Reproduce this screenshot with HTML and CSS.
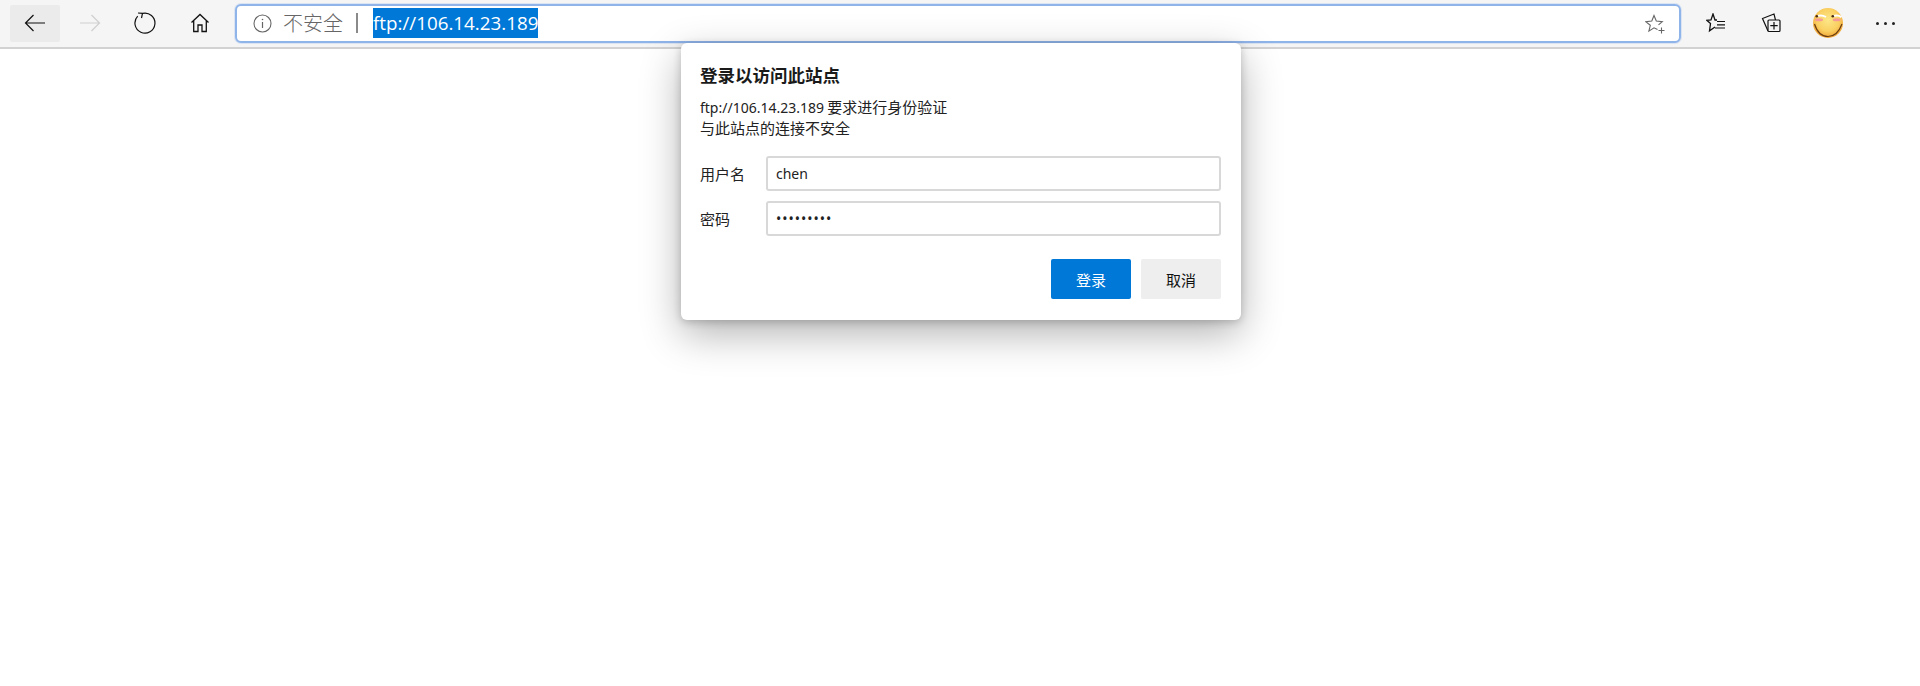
FILE: index.html
```html
<!DOCTYPE html>
<html lang="zh-CN">
<head>
<meta charset="utf-8">
<title>ftp://106.14.23.189</title>
<link rel="stylesheet" href="styles.css">
</head>
<body>
<header class="toolbar">
  <div class="nav">
    <button class="tool tool-back"><svg width="22" height="18" viewBox="0 0 22 18"><path d="M21 9H1.500M9.500 1L1.500 9l8 8" fill="none" stroke="#111" stroke-width="1.200"/></svg></button>
    <button class="tool tool-forward"><svg width="22" height="18" viewBox="0 0 22 18"><path d="M1 9h19.500M12.500 1l8 8-8 8" fill="none" stroke="#cfcfcf" stroke-width="1.200"/></svg></button>
    <button class="tool tool-reload"><svg width="24" height="24" viewBox="0 0 24 24"><path d="M9.500 2.400A10 10 0 1 1 4.700 5.200M5 2l4.500.4-1 4.600" fill="none" stroke="#111" stroke-width="1.200"/></svg></button>
    <button class="tool tool-home"><svg width="20" height="20" viewBox="0 0 20 20"><path d="M1.500 9.500L10 1.500l8.500 8M3.700 8v10.500h4.300v-6.500h4v6.500h4.300V8" fill="none" stroke="#111" stroke-width="1.300"/></svg></button>
  </div>
  <div class="omnibox">
    <svg class="info" width="19" height="19" viewBox="0 0 19 19"><circle cx="9.500" cy="9.500" r="8.500" fill="none" stroke="#666" stroke-width="1.100"/><path d="M9.500 8v6" stroke="#666" stroke-width="1.200"/><circle cx="9.500" cy="5.500" r=".8" fill="#666"/></svg>
    <span class="insecure">不安全</span>
    <span class="divider"></span>
    <span class="url">ftp://106.14.23.189</span>
    <svg class="fav-add" width="20" height="20" viewBox="0 0 20 20"><path d="M12.500 15.500l-3.500-1.700-5.100 3.300 1.400-5.800L.8 7.600l6-.6L9 1.500l2.300 5.500 6 .6-3.800 3.300" fill="none" stroke="#666" stroke-width="1.100"/><path d="M13.500 16.500h6M16.500 13.500v6" stroke="#666" stroke-width="1.100"/></svg>
  </div>
  <div class="actions">
    <button class="action action-favs"><svg width="20" height="20" viewBox="0 0 20 20"><path d="M11 7H9L7 1 5 7l-4.200.3 3.700 3.200-1 7.300L9 14" fill="none" stroke="#111" stroke-width="1.300"/><path d="M11 8.500h8M11 11.800h8M9 15h10" stroke="#111" stroke-width="1.200"/></svg></button>
    <button class="action action-coll"><svg width="20" height="20" viewBox="0 0 20 20"><path d="M7 18L1.500 5.500 13 1l1.500 6" fill="none" stroke="#111" stroke-width="1.200"/><rect x="7" y="7" width="12" height="11.500" rx="1" fill="#f5f5f5" stroke="#111" stroke-width="1.200"/><path d="M13 9v7.500M9.300 12.700h7.400" stroke="#111" stroke-width="1.200"/></svg></button>
    <div class="avatar">
      <svg width="30" height="30" viewBox="0 0 30 30">
        <defs><radialGradient id="face" cx=".5" cy=".4" r=".62"><stop offset="0" stop-color="#fce788"/><stop offset=".6" stop-color="#fad062"/><stop offset="1" stop-color="#ee9c2c"/></radialGradient></defs>
        <circle cx="15" cy="15" r="15" fill="url(#face)"/>
        <path d="M4 8.300C6.500 7 10 7.300 13 9M20 8.300c3-1.300 6-1 8.500.8" fill="none" stroke="#fff" stroke-width="2"/>
        <circle cx="3.800" cy="8.300" r="1.300" fill="#4a2a10"/><circle cx="19.800" cy="8.300" r="1.300" fill="#4a2a10"/>
        <ellipse cx="6" cy="11.800" rx="4" ry="1.500" fill="#f59a94"/><ellipse cx="23.700" cy="11.800" rx="4" ry="1.500" fill="#f59a94"/>
        <path d="M1.500 16C4 24 9 28.500 15 28.500S26 24 29 16" fill="none" stroke="#6b3d10" stroke-width="1.200"/>
      </svg>
    </div>
    <button class="action action-more"><span class="dot"></span><span class="dot"></span><span class="dot"></span></button>
  </div>
</header>
<main class="dialog">
  <h1 class="dialog-title">登录以访问此站点</h1>
  <p class="dialog-msg"><span class="latin">ftp://106.14.23.189</span> 要求进行身份验证<br>与此站点的连接不安全</p>
  <div class="field field-first"><label class="field-label">用户名</label><input class="field-input" type="text" value="chen"></div>
  <div class="field"><label class="field-label">密码</label><input class="field-input field-pass" type="password" value="123456789"></div>
  <div class="dialog-buttons">
    <button class="btn btn-primary">登录</button>
    <button class="btn btn-secondary">取消</button>
  </div>
</main>
</body>
</html>
```
FILE: styles.css
```css
* { box-sizing: border-box; }
html, body { margin: 0; height: 100%; background: #fff; overflow: hidden; }
body { font-family: "Noto Sans", "Noto Sans CJK SC", sans-serif; color: #111; }
button { border: 0; padding: 0; background: none; font: inherit; display: flex; align-items: center; justify-content: center; }
.toolbar { height: 49px; background: #f5f5f5; border-bottom: 2px solid #d2d2d2; display: flex; align-items: center; }
.toolbar > * { margin-top: -1px; }
.nav { display: flex; align-items: center; width: 235px; padding-left: 10px; gap: 5px; }
.tool { width: 50px; height: 37px; border-radius: 2px; }
.tool-back { background: #ebebeb; }
.omnibox { flex: 0 0 1446px; height: 39px; background: #fff; border: 2px solid #8fb4ea; border-radius: 6px; box-shadow: 0 0 0 1px rgba(143,180,234,.25); display: flex; align-items: center; padding-left: 16px; position: relative; }
.info { flex: none; }
.insecure { margin-left: 11px; font-size: 20px; line-height: 30px; color: #666; font-family: "Noto Sans CJK SC", sans-serif; font-weight: 300; }
.divider { width: 2px; height: 20px; background: #8a8a8a; margin-left: 13px; }
.url { margin-left: 15px; background: #0078d7; color: #fff; font-size: 18.800px; line-height: 30px; height: 30px; font-family: "Open Sans", sans-serif; }
.fav-add { position: absolute; right: 14px; top: 8px; }
.actions { flex: 1; display: flex; align-items: center; padding-left: 25px; }
.action { width: 20px; height: 30px; flex: none; }
.action-coll { margin-left: 35px; }
.avatar { margin-left: 32px; width: 30px; height: 30px; flex: none; }
.avatar svg { display: block; }
.action-more { margin-left: 32px; gap: 5px; }
.dot { width: 3px; height: 3px; border-radius: 50%; background: #222; flex: none; }
.dialog { position: absolute; left: 681px; top: 43px; width: 560px; height: 277px; background: #fff; border-radius: 6px; box-shadow: 0 14px 40px rgba(0,0,0,.3), 0 2px 8px rgba(0,0,0,.2); padding: 20px 20px 20px 19px; }
.dialog-title { margin: 0; font-size: 17.500px; line-height: 24px; font-weight: 700; color: #1a1a1a; font-family: "Noto Sans CJK SC", sans-serif; }
.dialog-msg { margin: 9px 0 0; font-size: 15px; line-height: 21px; height: 42px; color: #222; font-family: "Noto Sans CJK SC", sans-serif; }
.latin { font-family: "Noto Sans", sans-serif; font-size: 14px; line-height: 1; }
.field { display: flex; align-items: center; margin-top: 10px; }
.field-first { margin-top: 18px; }
.field-label { width: 66px; font-size: 15px; color: #222; font-family: "Noto Sans CJK SC", sans-serif; }
.field-input { width: 455px; height: 35px; border: 2px solid #d8d8d8; border-radius: 3px; padding: 0 8px; font: 14px "Noto Sans", sans-serif; color: #222; outline: 0; background: #fff; }
.field-pass { font-size: 14px; letter-spacing: 1px; }
.dialog-buttons { display: flex; justify-content: flex-end; gap: 10px; margin-top: 23px; }
.btn { width: 80px; height: 40px; border-radius: 2px; font-size: 15px; font-family: "Noto Sans CJK SC", sans-serif; }
.btn-primary { background: #0078d7; color: #fff; }
.btn-secondary { background: #eee; color: #111; }
```
